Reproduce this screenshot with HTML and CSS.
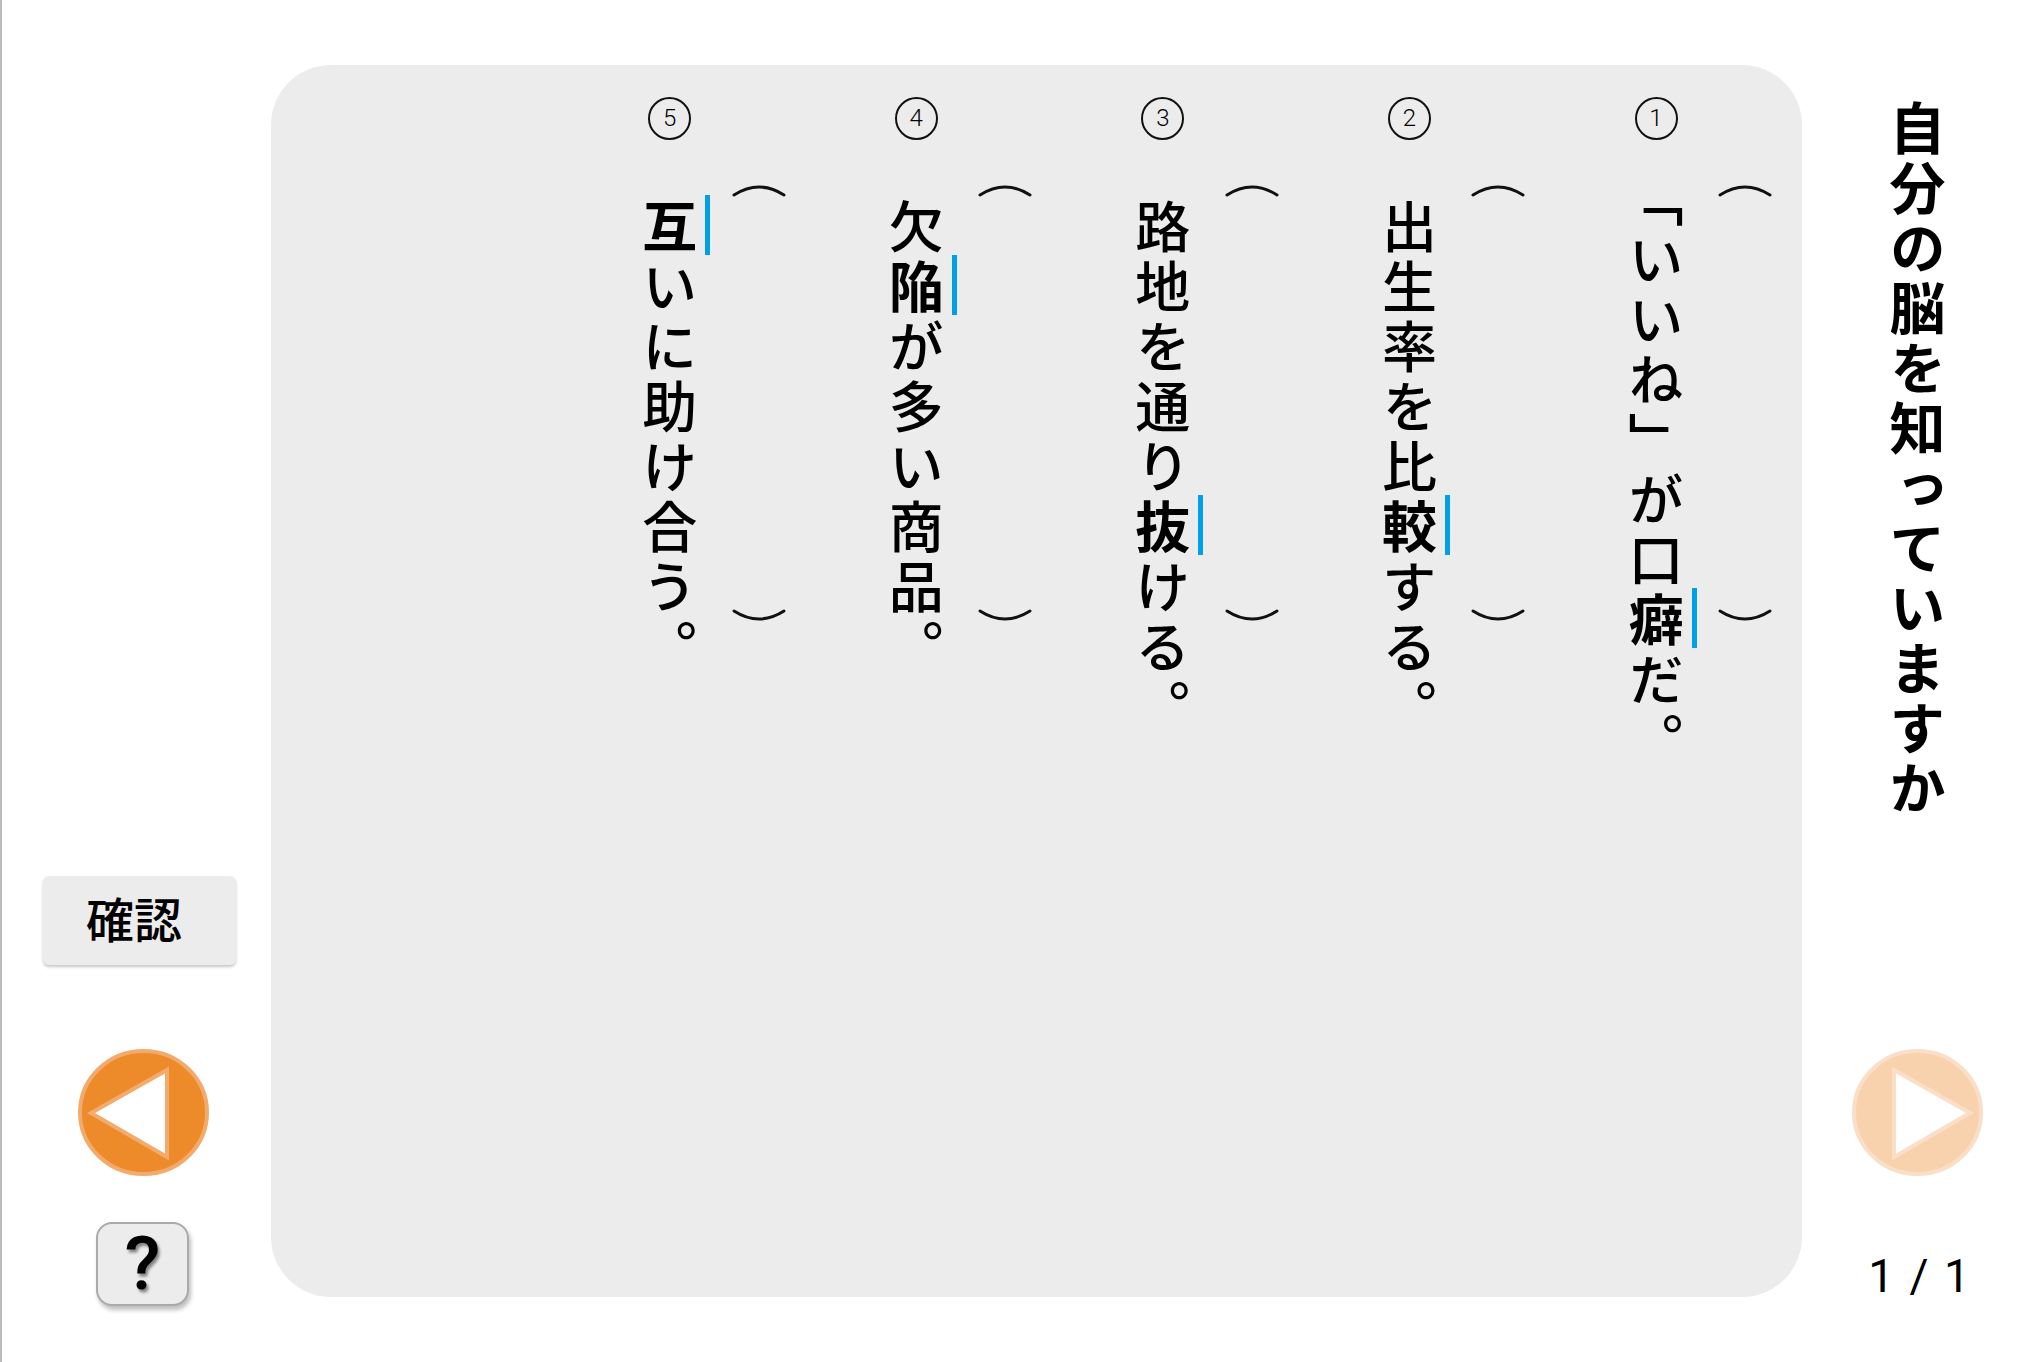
FILE: index.html
```html
<!DOCTYPE html>
<html lang="ja">
  <head>
    <meta charset="UTF-8" />
    <meta name="viewport" content="width=device-width, initial-scale=1.0" />
    <title>自分の脳を知っていますか</title>
    <link rel="stylesheet" href="styles.css">
  </head>
  <body>
    <div class="page">
      <aside class="side-left">
        <button class="check-btn">確認</button>
        <svg class="arrow-btn" viewBox="0 0 131 127">
          <ellipse cx="65.5" cy="63.5" rx="63.5" ry="61.5" />
          <polygon points="13,64 89,21 89,108" />
        </svg>
        <button class="help-btn">?</button>
      </aside>

      <main class="panel">
        <section class="question">
          <div class="question-body">
            <div class="number">1</div>
            <p class="question-text trim">「いいね」が口<b class="target">癖</b>だ。</p>
          </div>
          <div class="answer">
            <svg viewBox="0 0 54 13"><path d="M2 11 Q27 -5 52 11" /></svg>
            <svg viewBox="0 0 54 13"><path d="M2 2 Q27 18 52 2" /></svg>
          </div>
        </section>
        <section class="question">
          <div class="question-body">
            <div class="number">2</div>
            <p class="question-text">出生率を比<b class="target">較</b>する。</p>
          </div>
          <div class="answer">
            <svg viewBox="0 0 54 13"><path d="M2 11 Q27 -5 52 11" /></svg>
            <svg viewBox="0 0 54 13"><path d="M2 2 Q27 18 52 2" /></svg>
          </div>
        </section>
        <section class="question">
          <div class="question-body">
            <div class="number">3</div>
            <p class="question-text">路地を通り<b class="target">抜</b>ける。</p>
          </div>
          <div class="answer">
            <svg viewBox="0 0 54 13"><path d="M2 11 Q27 -5 52 11" /></svg>
            <svg viewBox="0 0 54 13"><path d="M2 2 Q27 18 52 2" /></svg>
          </div>
        </section>
        <section class="question">
          <div class="question-body">
            <div class="number">4</div>
            <p class="question-text">欠<b class="target">陥</b>が多い商品。</p>
          </div>
          <div class="answer">
            <svg viewBox="0 0 54 13"><path d="M2 11 Q27 -5 52 11" /></svg>
            <svg viewBox="0 0 54 13"><path d="M2 2 Q27 18 52 2" /></svg>
          </div>
        </section>
        <section class="question">
          <div class="question-body">
            <div class="number">5</div>
            <p class="question-text"><b class="target">互</b>いに助け合う。</p>
          </div>
          <div class="answer">
            <svg viewBox="0 0 54 13"><path d="M2 11 Q27 -5 52 11" /></svg>
            <svg viewBox="0 0 54 13"><path d="M2 2 Q27 18 52 2" /></svg>
          </div>
        </section>
      </main>

      <aside class="side-right">
        <h1 class="title">自分の脳を知っていますか</h1>
        <svg class="arrow-btn next" viewBox="0 0 131 127">
          <ellipse cx="65.5" cy="63.5" rx="63.5" ry="61.5" />
          <polygon points="13,64 89,21 89,108" />
        </svg>
        <div class="pager">1 / 1</div>
      </aside>
    </div>
  </body>
</html>
```

FILE: styles.css
```css
body {
  margin: 0;
  padding: 0;
  background: #fff;
  color: #000;
  font-family: "Noto Sans CJK JP", sans-serif;
}

.page {
  display: grid;
  grid-template-columns: 271px 1531px 222px;
  height: 1362px;
  overflow: hidden;
}

.side-left {
  display: flex;
  flex-direction: column;
  align-items: flex-start;
  justify-content: flex-end;
  padding-bottom: 56px;
  border-left: 2px solid #bbb;
}

.check-btn {
  width: 193px;
  height: 89px;
  margin-left: 41px;
  padding: 0 11px 7px 0;
  border: none;
  border-radius: 6px;
  background: #ececec;
  box-shadow: 0 2px 3px rgba(0, 0, 0, 0.22);
  font-family: inherit;
  font-size: 48px;
  font-weight: 500;
  color: #000;
}

.arrow-btn {
  display: block;
  width: 131px;
  height: 127px;
  margin: 84px 0 46px 76px;
}

.arrow-btn ellipse {
  fill: #ed8a2a;
  stroke: #f3ab6d;
  stroke-width: 4;
}

.arrow-btn polygon {
  fill: #fff;
  stroke: #f3ab6d;
  stroke-width: 4;
}

.arrow-btn.next {
  margin: 0;
  opacity: 0.38;
  transform: scaleX(-1);
}

.help-btn {
  box-sizing: border-box;
  width: 93px;
  height: 84px;
  margin-left: 94px;
  padding: 0;
  border: 2px solid #aaa;
  border-radius: 16px;
  background: #ececec;
  box-shadow: 2px 4px 4px rgba(0, 0, 0, 0.25);
  font-family: "Roboto", sans-serif;
  font-size: 74px;
  font-weight: 500;
  line-height: 78px;
  color: #000;
  text-shadow: 2px 3px 3px rgba(0, 0, 0, 0.45);
}

.panel {
  display: flex;
  flex-direction: row-reverse;
  gap: 100.6px;
  margin: 65px 0;
  padding: 32px 30px 0 0;
  border-radius: 60px;
  background: #ececec;
}

.question {
  display: flex;
  gap: 32px;
}

.question-body {
  display: flex;
  flex-direction: column;
  align-items: center;
  width: 60px;
}

.number {
  box-sizing: border-box;
  width: 43px;
  height: 43px;
  margin-bottom: 55px;
  border: 2px solid #111;
  border-radius: 50%;
  font-family: "Roboto", sans-serif;
  font-size: 24px;
  font-weight: 300;
  line-height: 38px;
  text-align: center;
}

.question-text {
  margin: 0;
  padding-top: 4px;
  writing-mode: vertical-rl;
  font-size: 55px;
  font-weight: 500;
  letter-spacing: 5px;
  line-height: 60px;
  white-space: nowrap;
}

.trim {
  text-spacing-trim: trim-start;
}

.target {
  position: relative;
  font-weight: 700;
}

/* 傍線 */
.target::after {
  content: "";
  position: absolute;
  top: -4px;
  height: 60px;
  left: 50%;
  width: 5px;
  margin-left: 35.5px;
  background: #00a0e9;
}

.answer {
  display: flex;
  flex-direction: column;
  justify-content: space-between;
  width: 54px;
  height: 438px;
  margin-top: 87px;
}

.answer svg {
  display: block;
  width: 54px;
  height: 13px;
}

.answer path {
  fill: none;
  stroke: #111;
  stroke-width: 3;
  stroke-linecap: round;
}

.side-right {
  display: flex;
  flex-direction: column;
  align-items: center;
  padding: 100px 0 0 8px;
}

.title {
  height: 720px;
  margin: 0 0 229px;
  writing-mode: vertical-rl;
  font-size: 56px;
  font-weight: 700;
  letter-spacing: 4px;
  line-height: 60px;
}

.pager {
  margin: 72px 0 0 4px;
  font-family: "Roboto", sans-serif;
  font-size: 46px;
  line-height: 56px;
  word-spacing: 4px;
}
```
